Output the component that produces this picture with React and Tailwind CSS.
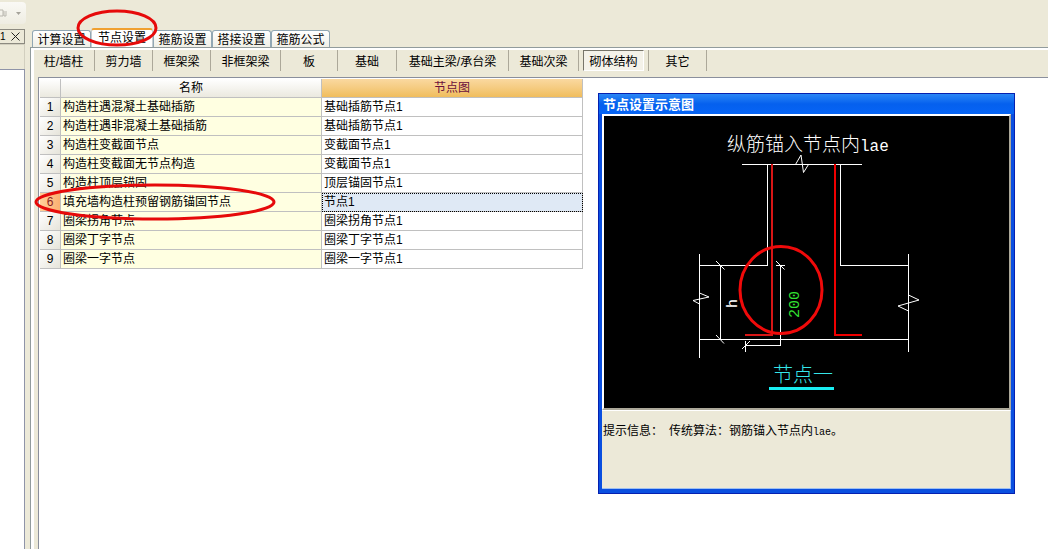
import { useState } from "react";

const tabs = ["计算设置", "节点设置", "箍筋设置", "搭接设置", "箍筋公式"];

const categories = [
  { label: "柱/墙柱", width: "w-[62px]" },
  { label: "剪力墙", width: "w-[58px]" },
  { label: "框架梁", width: "w-[58px]" },
  { label: "非框架梁", width: "w-[70px]" },
  { label: "板", width: "w-[57px]" },
  { label: "基础", width: "w-[59px]" },
  { label: "基础主梁/承台梁", width: "w-[112px]" },
  { label: "基础次梁", width: "w-[70px]" },
  { label: "砌体结构", width: "w-[70px]" },
  { label: "其它", width: "w-[58px]" },
];

const rows = [
  { name: "构造柱遇混凝土基础插筋", node: "基础插筋节点1" },
  { name: "构造柱遇非混凝土基础插筋", node: "基础插筋节点1" },
  { name: "构造柱变截面节点", node: "变截面节点1" },
  { name: "构造柱变截面无节点构造", node: "变截面节点1" },
  { name: "构造柱顶层锚固", node: "顶层锚固节点1" },
  { name: "填充墙构造柱预留钢筋锚固节点", node: "节点1" },
  { name: "圈梁拐角节点", node: "圈梁拐角节点1" },
  { name: "圈梁丁字节点", node: "圈梁丁字节点1" },
  { name: "圈梁一字节点", node: "圈梁一字节点1" },
];

const SidePanel = () => (
  <aside className="w-[25px] shrink-0 flex flex-col">
    <div className="h-[15px] border border-l-0 border-[#8c8a80] flex items-center justify-between pr-[4px] overflow-hidden">
      <span className="text-[10px] leading-[12px]">1</span>
      <button aria-label="关闭">
        <svg width="9" height="9" viewBox="0 0 9 9" className="block">
          <path d="M0.500 0.500L8.500 8.500M8.500 0.500L0.500 8.500" stroke="#222" />
        </svg>
      </button>
    </div>
    <div className="h-[25px] border-t border-r border-[#d2cfbf]" />
    <div className="flex-1 bg-white border-t border-r border-[#8f94a8]" />
  </aside>
);

const NodeTable = ({ selected, onSelect }) => (
  <table className="table-fixed border-separate border-spacing-0 w-[543px] leading-[18px]">
    <colgroup>
      <col className="w-[21px]" />
      <col className="w-[261px]" />
      <col className="w-[261px]" />
    </colgroup>
    <thead>
      <tr>
        <th className="h-[19px] p-0 border-r border-b border-[#c0c0c0] bg-linear-to-b from-white to-[#ebe9df]" />
        <th className="h-[19px] p-0 border-r border-b border-[#c0c0c0] bg-linear-to-b from-white to-[#ebe9df] font-normal">
          名称
        </th>
        <th className="h-[19px] p-0 border-r border-b border-[#c0c0c0] bg-linear-to-b from-[#fad9a0] to-[#f0bd5c] font-normal text-[#6b0f3c]">
          节点图
        </th>
      </tr>
    </thead>
    <tbody>
      {rows.map((row, i) => (
        <tr key={i} onClick={() => onSelect(i)}>
          <th
            className={`h-[19px] p-0 border-r border-b border-[#c0c0c0] font-normal ${
              i === selected
                ? "bg-linear-to-r from-[#ffd09a] to-[#fbb071] text-[#8a1c1c]"
                : "bg-linear-to-br from-white to-[#e6e4da]"
            }`}
          >
            {i + 1}
          </th>
          <td className="h-[19px] p-0 pl-[2px] border-r border-b border-[#c0c0c0] bg-[#ffffe1]">
            {row.name}
          </td>
          <td
            className={`h-[19px] p-0 pl-[2px] border-r border-b border-[#c0c0c0] ${
              i === selected
                ? "bg-[#dfe9f5] outline-1 outline-dotted outline-black -outline-offset-1"
                : "bg-white"
            }`}
          >
            {row.node}
          </td>
        </tr>
      ))}
    </tbody>
  </table>
);

const NodeDrawing = () => (
  <svg
    viewBox="0 0 405 292"
    className="block w-full h-[292px] bg-black"
    fill="none"
  >
    <g stroke="#fff" shapeRendering="crispEdges">
      {/* column */}
      <path d="M138 48.5H258M163.5 48V149.5M236.5 48V149.5" />
      {/* foundation */}
      <path d="M95.5 138V242M304.5 138V236M95 149.5H164M236 149.5H305M95 223.5H305" />
      {/* dimension lines */}
      <path d="M116.5 149V223M176.5 149V229.5H141M141.5 225V236M172 149.5H181" />
    </g>
    <g stroke="#fff">
      <path d="M191.500 48.500L197 39L199.500 56.500L204.500 48.500" />
      <path d="M95.500 177L105 181L89 184.500L95.500 188" />
      <path d="M304.500 179L315 184L294 190L304.500 195" />
      <path d="M112 145L120.500 153.500M112 219L120 227.500M172 145L180.500 153.500M138 233L146 225" />
    </g>
    {/* rebar */}
    <path d="M168 48V219H141" stroke="#d81616" strokeWidth="2" />
    <path d="M231 48V219H258" stroke="#f00000" strokeWidth="2" />
    <text
      x="123"
      y="35"
      fill="#fff"
      className="font-['Liberation_Mono','Noto_Sans_CJK_SC',monospace] text-[19px] font-light"
    >
      纵筋锚入节点内<tspan className="text-[16px]">lae</tspan>
    </text>
    <text
      transform="translate(133 192) rotate(-90)"
      fill="#fff"
      className="font-['Liberation_Mono',monospace] text-[15px]"
    >
      h
    </text>
    <text
      transform="translate(195 202) rotate(-90)"
      fill="#33e233"
      className="font-['Liberation_Mono',monospace] text-[15px]"
    >
      200
    </text>
    <text
      x="169"
      y="266"
      fill="#35e6ea"
      className="font-['Noto_Sans_CJK_SC',sans-serif] text-[20px] font-light"
    >
      节点一
    </text>
    <path d="M165 272.500H230" stroke="#19eef2" strokeWidth="3" />
    <ellipse cx="177" cy="174" rx="41" ry="43.500" stroke="#f00a0a" strokeWidth="3" />
  </svg>
);

const PreviewWindow = () => (
  <section className="absolute left-[598px] top-[93px] w-[417px] border border-[#0520b0] bg-[#0a4fe0] px-[3px] pb-[4px]">
    <h2 className="-mx-[3px] h-[20px] pl-[4px] bg-linear-to-b from-[#2a86f5] via-[#0560ee] to-[#0664f5] text-white text-[13px] leading-[22px] font-bold">
      节点设置示意图
    </h2>
    <div className="border-2 border-t-white border-l-white border-r-[#aca899] border-b-[#aca899]">
      <NodeDrawing />
    </div>
    <div className="h-[79px] pt-[10px] pl-[1px] bg-[#ece9d8] border border-l-0 border-t-white border-r-[#9fc0f0] border-b-[#9fc0f0]">
      <p className="leading-[20px] whitespace-pre">
        提示信息：
        <span className="font-['Liberation_Mono',monospace] text-[10px]"> </span>
        传统算法：钢筋锚入节点内
        <span className="font-['Liberation_Mono',monospace] text-[10px]">lae</span>。
      </p>
    </div>
  </section>
);

const App = () => {
  const [tab, setTab] = useState(1);
  const [category, setCategory] = useState(8);
  const [selected, setSelected] = useState(5);

  return (
    <div className="relative min-h-screen flex flex-col overflow-hidden bg-[#ece9d8] text-black text-[12px] font-['Liberation_Sans','Noto_Sans_CJK_SC',sans-serif]">
      <div className="h-[28px] pt-[2px]">
        <div className="w-[26px] h-[22px] flex items-center justify-between pr-[5px] rounded-r bg-linear-to-b from-[#faf9f5] to-[#efede2]">
          <svg width="7" height="8" viewBox="0 0 7 8">
            <path d="M0 1H3V7H0M4 2V7H6V2" stroke="#b9b7af" fill="none" />
          </svg>
          <svg width="5" height="3" viewBox="0 0 5 3">
            <path d="M0 0H5L2.500 3Z" fill="#a5a39a" />
          </svg>
        </div>
      </div>

      <div className="flex-1 flex gap-[5px]">
        <div className="flex pt-[1px]">
          <SidePanel />
        </div>

        <main className="flex-1 min-w-0 flex flex-col">
          <div role="tablist" className="h-[19px] pl-[2px] flex items-end">
            {tabs.map((label, i) => (
              <button
                key={label}
                role="tab"
                aria-selected={i === tab}
                onClick={() => setTab(i)}
                className={
                  i === tab
                    ? "w-[62px] h-[19px] leading-[17px] bg-white border-t-2 border-t-[#f0a030] border-x border-x-[#c5ccd0] rounded-t-[3px]"
                    : "w-[59px] h-[17px] leading-[18px] bg-linear-to-b from-white to-[#f0efe6] border border-b-0 border-[#91a7b4] rounded-t-[3px]"
                }
              >
                {label}
              </button>
            ))}
          </div>

          <div className="flex-1 flex flex-col bg-white border-t border-l border-[#919b9c] pt-[2px] pl-[3px]">
            <div className="flex-1 flex flex-col bg-[#ece9d8] pl-[4px]">
              <div className="-ml-[5px] h-[27px] flex">
                {categories.map((item, i) => (
                  <div
                    key={item.label}
                    className={`${item.width} h-[21px] flex items-stretch border-r border-[#aca899]`}
                  >
                    <button
                      onClick={() => setCategory(i)}
                      className={
                        i === category
                          ? "flex-1 mx-[4px] pt-[2px] leading-[18px] whitespace-nowrap bg-[#f4f2e9] border border-t-[#77756a] border-l-[#77756a] border-r-white border-b-white"
                          : "flex-1 pt-[2px] leading-[18px] whitespace-nowrap"
                      }
                    >
                      {item.label}
                    </button>
                  </div>
                ))}
              </div>
              <div className="flex-1 bg-white border-t border-l border-[#8a8f9c] pt-[1px] pl-[1px]">
                <NodeTable selected={selected} onSelect={setSelected} />
              </div>
            </div>
          </div>
        </main>
      </div>

      <PreviewWindow />

      {/* red highlight marks */}
      <svg
        width="84"
        height="40"
        className="absolute left-[75px] top-[8px] pointer-events-none"
      >
        <ellipse cx="42" cy="20" rx="39" ry="17" fill="none" stroke="#e60a0a" strokeWidth="3" />
      </svg>
      <svg
        width="244"
        height="40"
        className="absolute left-[33px] top-[182px] pointer-events-none"
      >
        <ellipse cx="122" cy="20" rx="119" ry="17" fill="none" stroke="#e60a0a" strokeWidth="3" />
      </svg>
    </div>
  );
};

export default App;
